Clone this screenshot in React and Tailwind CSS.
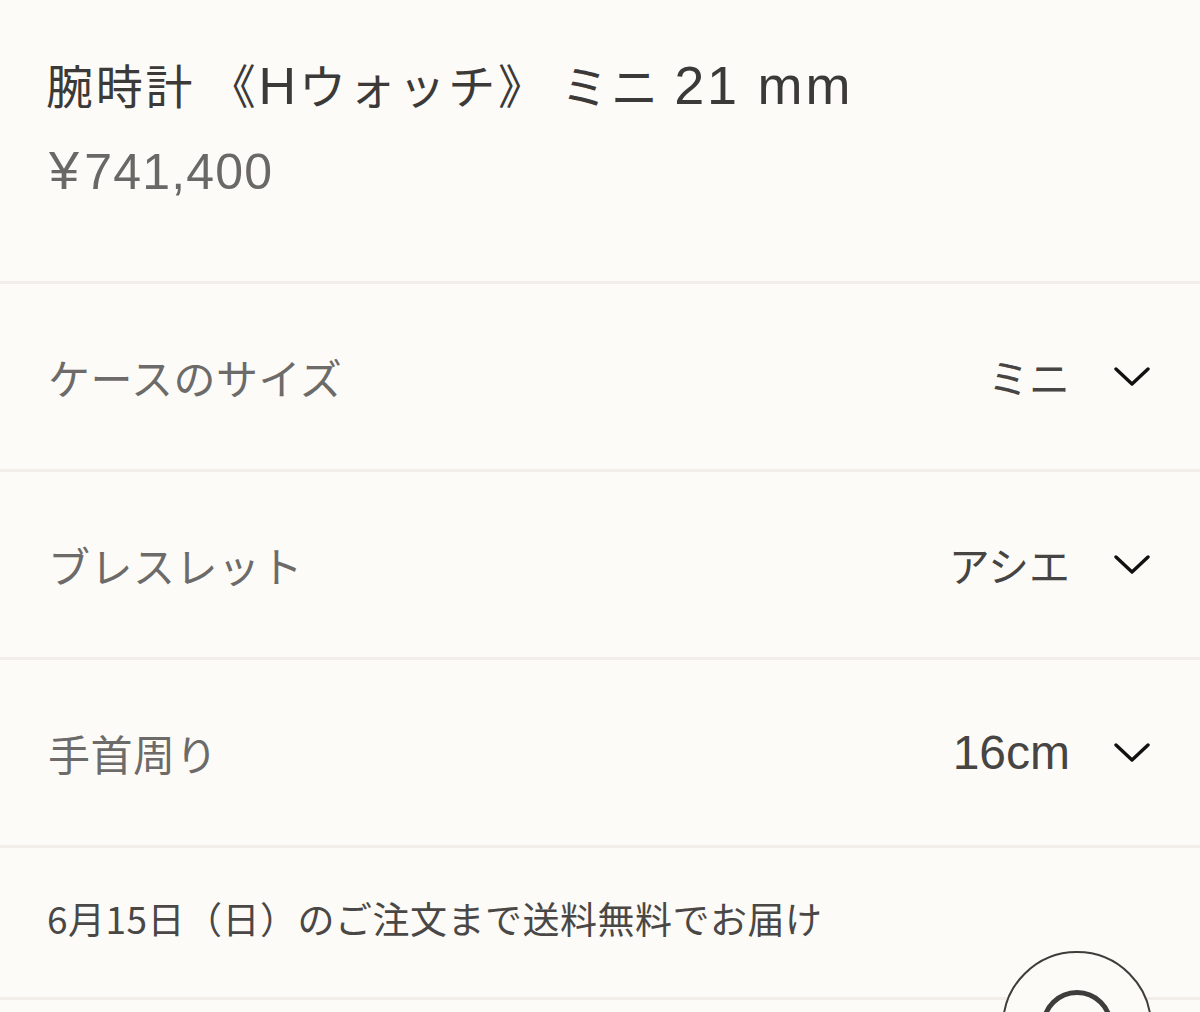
import React from "react";

const jp = { fontFamily: '"Noto Sans CJK JP", "Noto Sans", sans-serif' };

function Chevron() {
  return (
    <svg width="36" height="22" viewBox="0 0 36 22" fill="none" className="shrink-0">
      <polyline points="2,3 18,18 34,3" stroke="#111" strokeWidth="3.4" strokeLinecap="round" strokeLinejoin="round" />
    </svg>
  );
}

function Row({ label, value, latin }) {
  return (
    <div className="h-[188px] flex items-center justify-between pl-[48px] pr-[50px] border-b-[3px] border-[#f1eee9]">
      <span className="text-[42px] tracking-[0.5px] text-[#6d6b69]">{label}</span>
      <div className="flex items-center gap-[44px]">
        {latin ? (
          <span className="text-[48px] text-[#474543] [font-family:'Liberation_Sans',sans-serif]">{value}</span>
        ) : (
          <span className="text-[41px] text-[#474543]">{value}</span>
        )}
        <Chevron />
      </div>
    </div>
  );
}

export default function App() {
  return (
    <div className="relative h-[1012px] overflow-hidden bg-[#fdfbf7]" style={jp}>
      <div className="h-[284px] border-b-[3px] border-[#f1eee9] pl-[46px] pt-[52px]">
        <h1 className="text-[47px] tracking-[2.8px] leading-[64px] text-[#3c3a38] font-normal whitespace-nowrap">
          腕時計 《<span className="text-[52px] [font-family:'Liberation_Sans',sans-serif]">H</span>ウォッチ》 ミニ <span className="text-[54px] [font-family:'Liberation_Sans',sans-serif]">21 mm</span>
        </h1>
        <div className="mt-[22px] leading-[60px] text-[#6a6866] [font-family:'Liberation_Sans',sans-serif] text-[50px] tracking-[1.2px] pl-[3px]">
          <span className="mr-[4px] text-[54px]">¥</span>741,400
        </div>
      </div>
      <Row label="ケースのサイズ" value="ミニ" />
      <Row label="ブレスレット" value="アシエ" />
      <Row label="手首周り" value="16cm" latin />
      <div className="h-[152px] flex items-center pl-[47px] border-b-[3px] border-[#f1eee9]">
        <span className="text-[37px] tracking-[0.5px] text-[#4a4846] -mt-[8px]">6月15日（日）のご注文まで送料無料でお届け</span>
      </div>
      <div className="absolute left-[1002px] top-[951px] w-[150px] h-[150px] rounded-full border-[2.5px] border-[#3f3d3b] bg-[#fdfbf7] flex items-center justify-center">
        <div className="w-[72px] h-[72px] rounded-full border-[5px] border-[#3f3d3b]"></div>
      </div>
    </div>
  );
}
